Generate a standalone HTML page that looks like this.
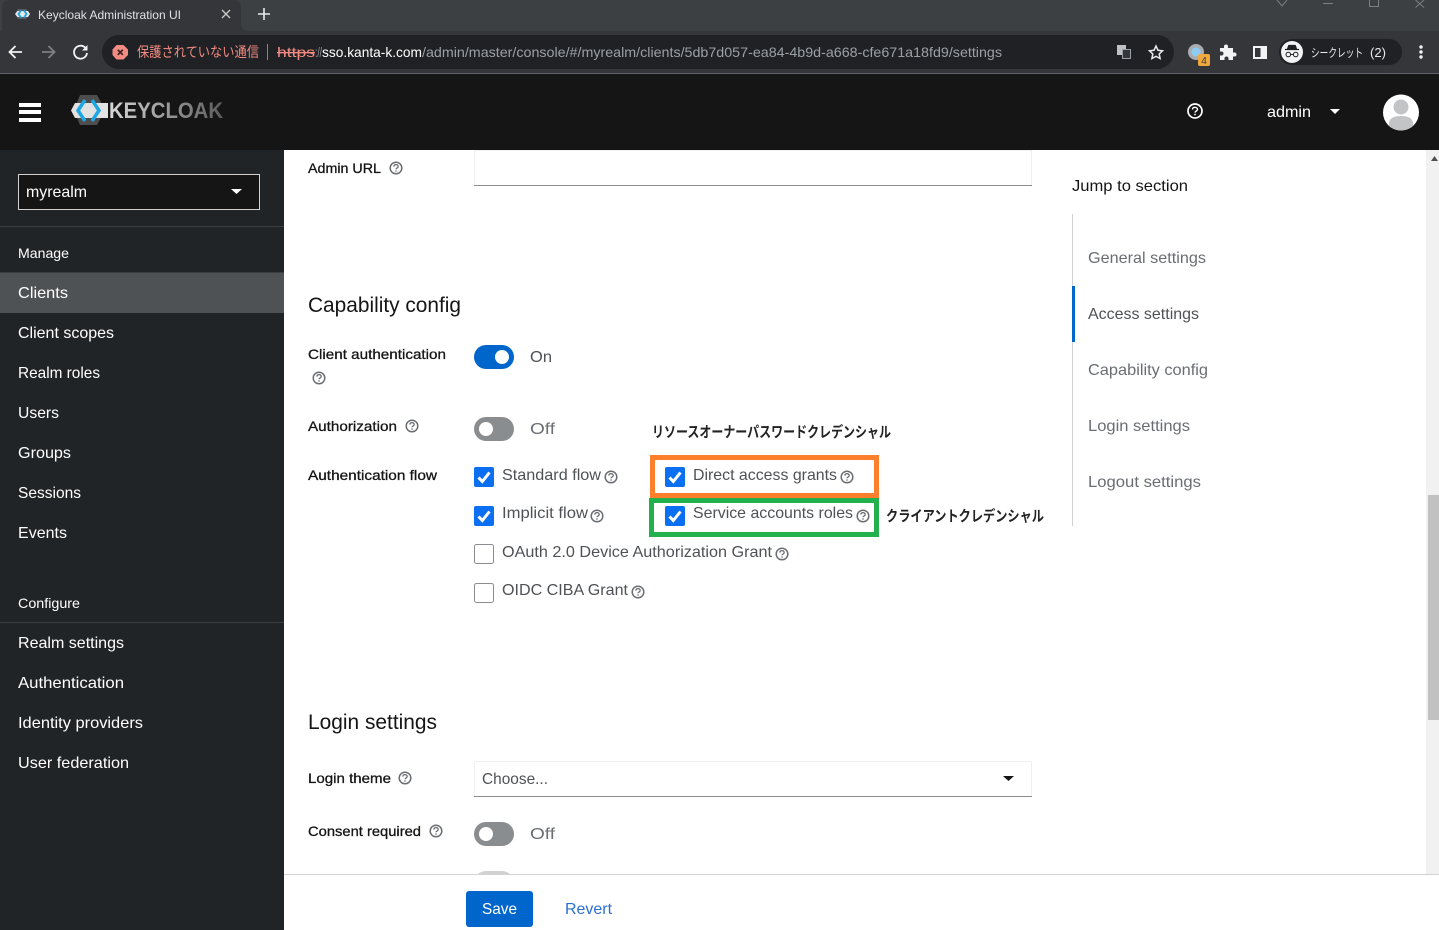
<!DOCTYPE html>
<html lang="ja"><head><meta charset="utf-8"><title>Keycloak Administration UI</title>
<style>
html,body{margin:0;padding:0;background:#fff;overflow:hidden}
svg{display:block;width:1439px;height:930px}
text{font-family:"Liberation Sans","Noto Sans CJK JP",sans-serif;dominant-baseline:auto}
.s{font-size:16px;fill:#fff}
.l{font-size:14px;fill:#151515;stroke:#151515;stroke-width:.3px}
.v{font-size:16px;fill:#4f5255}
.j{font-size:16px;fill:#6a6e73}
.h{font-size:21px;fill:#151515}
.jp{font-size:15px;font-weight:bold;fill:#222}
</style></head><body>
<svg xmlns="http://www.w3.org/2000/svg" width="1439" height="930" viewBox="0 0 1439 930">
<defs>
<g id="q"><circle r="5.8" fill="none" stroke="#6a6e73" stroke-width="1.5"/><path d="M-2.1-1.4C-2.1-3 -.9-3.4 0-3.4 1.3-3.4 2.2-2.6 2.2-1.5 2.2 0 0 .1 0 1.3" fill="none" stroke="#6a6e73" stroke-width="1.3"/><circle cy="3" r=".8" fill="#6a6e73"/></g>
<g id="c"><rect width="20" height="20" rx="2" fill="#0a6ff0"/><path d="M4.5 10.5 8.3 14.5 15.5 5.5" fill="none" stroke="#fff" stroke-width="3"/></g>
<g id="u"><rect x=".5" y=".5" width="19" height="19" rx="2" fill="#fff" stroke="#8a8d90"/></g>
<linearGradient id="kg" x1="0" x2="1" y1="0" y2="0"><stop offset="0" stop-color="#d8d8d8"/><stop offset="1" stop-color="#5c5c5c"/></linearGradient>
</defs>

<!-- browser chrome -->
<rect width="1439" height="31" fill="#3c4043"/>
<path d="M2 31V8Q2 0 10 0H233Q241 0 241 8V23Q241 31 249 31Z" fill="#35363a"/>
<rect y="31" width="1439" height="42" fill="#35363a"/>
<rect y="73" width="1439" height="1" fill="#5f6368"/>
<path d="M18 9H26L30 14 26 19H18L15 14Z" fill="#5a5d60"/><path d="M15 14 17.500 11H28L30 14 28 17H17.500Z" fill="#e8e8e8"/><path d="M21 10.500 18.500 14 21 17.500M24 10.500 26.500 14 24 17.500" stroke="#1ea5e0" stroke-width="1.800" fill="none"/>
<text x="38" y="19" font-size="12" fill="#dee1e6" textLength="143" lengthAdjust="spacingAndGlyphs">Keycloak Administration UI</text>
<path d="M222 10 230 18M230 10 222 18" stroke="#c4c7c5" stroke-width="1.4"/>
<path d="M264 8V20M258 14H270" stroke="#e8eaed" stroke-width="1.6"/>
<path d="M22 52H10M15.5 46 9.5 52 15.5 58" fill="none" stroke="#f1f3f4" stroke-width="1.8"/>
<path d="M54 52H42M48.5 46 54.5 52 48.5 58" fill="none" stroke="#7d8083" stroke-width="1.8"/>
<path d="M85.5 48A6.5 6.5 0 1 0 87 53" fill="none" stroke="#f1f3f4" stroke-width="1.8"/><path d="M87.5 45V50.5H82Z" fill="#f1f3f4"/>
<rect x="102" y="35" width="1072" height="34" rx="17" fill="#202124"/>
<path d="M116.5 45H123.5L128 49.5V55L123.5 59.500H116.500L112.500 55V49.500Z" fill="#f28b82"/><path d="M117.800 49.800 122.800 54.800M122.800 49.800 117.800 54.800" stroke="#3a2020" stroke-width="1.700"/>
<text x="137" y="57" font-size="14" fill="#f28b82" textLength="122" lengthAdjust="spacingAndGlyphs">保護されていない通信</text>
<rect x="267" y="44" width="1" height="16" fill="#80868b"/>
<text x="277" y="57" font-size="14" fill="#f28b82" textLength="38" lengthAdjust="spacingAndGlyphs" text-decoration="line-through">https</text>
<text x="315" y="57" font-size="14" fill="#9aa0a6" textLength="7" lengthAdjust="spacingAndGlyphs">://</text>
<text x="322" y="57" font-size="14" fill="#fff" textLength="100" lengthAdjust="spacingAndGlyphs">sso.kanta-k.com</text>
<text x="422" y="57" font-size="14" fill="#9aa0a6" textLength="580" lengthAdjust="spacingAndGlyphs">/admin/master/console/#/myrealm/clients/5db7d057-ea84-4b9d-a668-cfe671a18fd9/settings</text>
<rect x="1117" y="45" width="9" height="10" fill="#bdc1c6"/><rect x="1122.500" y="49.500" width="8" height="9" fill="#35363a" stroke="#9aa0a6"/>
<path d="M1156 46 1158 50.300 1162.500 50.800 1159.200 54 1160.100 58.500 1156 56.300 1151.900 58.500 1152.800 54 1149.500 50.800 1154 50.300Z" fill="none" stroke="#e8eaed" stroke-width="1.500"/>
<circle cx="1196" cy="52" r="8" fill="#a9adb1"/><circle cx="1196" cy="52" r="4.500" fill="#8ecbf5"/>
<rect x="1198" y="54" width="12" height="12" rx="2" fill="#f0a83c"/><text x="1204" y="64" font-size="10" fill="#3a3a3a" text-anchor="middle">4</text>
<path d="M1220 48H1224V46.500A2 2 0 0 1 1228 46.500V48H1233V52.500H1234.500A2 2 0 0 1 1234.500 56.500H1233V60H1228.500V58.500A2 2 0 0 0 1224.500 58.500V60H1220V55.500H1221.500A2 2 0 0 0 1221.500 51.500H1220Z" fill="#f1f3f4"/>
<rect x="1253" y="46" width="14" height="13" fill="#f1f3f4"/><rect x="1255" y="48" width="5.500" height="9" fill="#35363a"/>
<rect x="1279" y="39" width="123" height="26" rx="13" fill="#202124"/>
<circle cx="1292" cy="52" r="11" fill="#f1f3f4"/>
<path d="M1285 49.500H1299M1287.500 49 1288.800 45.500H1295.200L1296.500 49" stroke="#202124" stroke-width="1.200" fill="#202124"/><circle cx="1288.300" cy="54.500" r="2.300" fill="none" stroke="#202124" stroke-width="1"/><circle cx="1295.700" cy="54.500" r="2.300" fill="none" stroke="#202124" stroke-width="1"/><path d="M1290.500 54.500H1293.500" stroke="#202124"/>
<text x="1311" y="57" font-size="12" fill="#e8eaed" textLength="52" lengthAdjust="spacingAndGlyphs">シークレット</text>
<text x="1370" y="57" font-size="13" fill="#e8eaed" textLength="16" lengthAdjust="spacing">(2)</text>
<circle cx="1421" cy="47" r="1.700" fill="#f1f3f4"/><circle cx="1421" cy="52" r="1.700" fill="#f1f3f4"/><circle cx="1421" cy="57" r="1.700" fill="#f1f3f4"/>
<path d="M1277 0 1282 6 1287 0" fill="none" stroke="#7c7f82"/><path d="M1323 3.500H1333" stroke="#7c7f82"/><path d="M1369.500 0V6.500H1378.500V0" fill="none" stroke="#7c7f82"/><path d="M1415.500 0 1424 7.500M1424 0 1415.500 7.500" stroke="#7c7f82"/>

<!-- header -->
<rect y="74" width="1439" height="76" fill="#151515"/>
<rect x="19" y="103" width="22" height="4" fill="#fff"/><rect x="19" y="110" width="22" height="4" fill="#fff"/><rect x="19" y="118" width="22" height="4" fill="#fff"/>
<path d="M80 95H97L105 110 97 125H80L74 110Z" fill="#4d4d4d"/>
<path d="M75 103H108V118H75L71 110.500Z" fill="#e2e2e2"/>
<path d="M85 100 78 110.500 85 121M92 100 99 110.500 92 121" fill="none" stroke="#1fa7e4" stroke-width="3.500"/>
<text x="109" y="118" font-size="22" font-weight="bold" fill="url(#kg)" textLength="114" lengthAdjust="spacingAndGlyphs">KEYCLOAK</text>
<circle cx="1195" cy="111" r="7" fill="none" stroke="#fff" stroke-width="1.700"/><path d="M1192.500 109.500C1192.500 107.800 1193.800 107.300 1195 107.300 1196.500 107.300 1197.500 108.200 1197.500 109.400 1197.500 111 1195 111.200 1195 112.600" fill="none" stroke="#fff" stroke-width="1.400"/><circle cx="1195" cy="114.500" r=".9" fill="#fff"/>
<text x="1267" y="117" font-size="16" fill="#fff" textLength="44" lengthAdjust="spacingAndGlyphs">admin</text>
<path d="M1330 109H1340L1335 114Z" fill="#fff"/>
<circle cx="1401" cy="112.500" r="18" fill="#fff"/>
<clipPath id="av"><circle cx="1401" cy="112.500" r="18"/></clipPath>
<g clip-path="url(#av)" fill="#c2c4c6"><circle cx="1401" cy="107" r="7.500"/><path d="M1389 131V124C1389 118 1394 116 1401 116S1413 118 1413 124V131Z"/></g>

<!-- sidebar -->
<rect y="150" width="284" height="780" fill="#212427"/>
<rect x="18.500" y="174.500" width="241" height="35" fill="#151515" stroke="#d2d2d2"/>
<text x="26" y="197" font-size="16" fill="#fff" textLength="61" lengthAdjust="spacingAndGlyphs">myrealm</text>
<path d="M231 189H242L236.500 194Z" fill="#fff"/>
<rect y="226" width="284" height="1" fill="#3c3f42"/>
<text x="18" y="258" font-size="14" fill="#fff" textLength="51" lengthAdjust="spacingAndGlyphs">Manage</text>
<rect y="272" width="284" height="1" fill="#3c3f42"/>
<rect y="273" width="284" height="40" fill="#4f5255"/>
<text class="s" x="18" y="298" textLength="50" lengthAdjust="spacingAndGlyphs">Clients</text>
<text class="s" x="18" y="338" textLength="96" lengthAdjust="spacingAndGlyphs">Client scopes</text>
<text class="s" x="18" y="378" textLength="82" lengthAdjust="spacingAndGlyphs">Realm roles</text>
<text class="s" x="18" y="418" textLength="41" lengthAdjust="spacingAndGlyphs">Users</text>
<text class="s" x="18" y="458" textLength="53" lengthAdjust="spacingAndGlyphs">Groups</text>
<text class="s" x="18" y="498" textLength="63" lengthAdjust="spacingAndGlyphs">Sessions</text>
<text class="s" x="18" y="538" textLength="49" lengthAdjust="spacingAndGlyphs">Events</text>
<text x="18" y="608" font-size="14" fill="#fff" textLength="62" lengthAdjust="spacingAndGlyphs">Configure</text>
<rect y="622" width="284" height="1" fill="#3c3f42"/>
<text class="s" x="18" y="648" textLength="106" lengthAdjust="spacingAndGlyphs">Realm settings</text>
<text class="s" x="18" y="688" textLength="106" lengthAdjust="spacingAndGlyphs">Authentication</text>
<text class="s" x="18" y="728" textLength="125" lengthAdjust="spacingAndGlyphs">Identity providers</text>
<text class="s" x="18" y="768" textLength="111" lengthAdjust="spacingAndGlyphs">User federation</text>

<!-- main form -->
<text class="l" x="308" y="173" textLength="73" lengthAdjust="spacingAndGlyphs">Admin URL</text><use href="#q" x="396" y="168"/>
<rect x="474.500" y="150.500" width="557" height="35" fill="#fff" stroke="#f0f0f0"/><rect x="474" y="185" width="558" height="1" fill="#8a8d90"/>
<text class="h" x="308" y="312" textLength="153" lengthAdjust="spacingAndGlyphs">Capability config</text>
<text class="l" x="308" y="359" textLength="138" lengthAdjust="spacingAndGlyphs">Client authentication</text><use href="#q" x="319" y="378"/>
<rect x="474" y="345" width="40" height="24" rx="12" fill="#06c"/><circle cx="502" cy="357" r="7" fill="#fff"/>
<text class="v" x="530" y="362" textLength="22" lengthAdjust="spacingAndGlyphs">On</text>
<text class="l" x="308" y="431" textLength="89" lengthAdjust="spacingAndGlyphs">Authorization</text><use href="#q" x="412" y="426"/>
<rect x="474" y="417" width="40" height="24" rx="12" fill="#8a8d90"/><circle cx="486" cy="429" r="7" fill="#fff"/>
<text class="j" x="530" y="434" textLength="25" lengthAdjust="spacingAndGlyphs">Off</text>
<text class="jp" x="652" y="437" textLength="239" lengthAdjust="spacingAndGlyphs">リソースオーナーパスワードクレデンシャル</text>
<text class="l" x="308" y="480" textLength="129" lengthAdjust="spacingAndGlyphs">Authentication flow</text>

<use href="#c" x="474" y="467"/><text class="v" x="502" y="480" textLength="99" lengthAdjust="spacingAndGlyphs">Standard flow</text><use href="#q" x="611" y="477"/>
<rect x="652.500" y="457.500" width="224" height="38" fill="none" stroke="#fd7e2b" stroke-width="5"/>
<use href="#c" x="665" y="467"/><text class="v" x="693" y="480" textLength="144" lengthAdjust="spacingAndGlyphs">Direct access grants</text><use href="#q" x="847" y="477"/>
<use href="#c" x="474" y="506"/><text class="v" x="502" y="518" textLength="86" lengthAdjust="spacingAndGlyphs">Implicit flow</text><use href="#q" x="597" y="516"/>
<rect x="651.500" y="500.500" width="225" height="34" fill="none" stroke="#22b14c" stroke-width="5"/>
<use href="#c" x="665" y="506"/><text class="v" x="693" y="518" textLength="160" lengthAdjust="spacingAndGlyphs">Service accounts roles</text><use href="#q" x="863" y="516"/>
<text class="jp" x="886" y="521" textLength="158" lengthAdjust="spacingAndGlyphs">クライアントクレデンシャル</text>
<use href="#u" x="474" y="544"/><text class="v" x="502" y="557" textLength="270" lengthAdjust="spacingAndGlyphs">OAuth 2.0 Device Authorization Grant</text><use href="#q" x="782" y="554"/>
<use href="#u" x="474" y="583"/><text class="v" x="502" y="595" textLength="126" lengthAdjust="spacingAndGlyphs">OIDC CIBA Grant</text><use href="#q" x="638" y="592"/>

<text class="h" x="308" y="729" textLength="129" lengthAdjust="spacingAndGlyphs">Login settings</text>
<text class="l" x="308" y="783" textLength="83" lengthAdjust="spacingAndGlyphs">Login theme</text><use href="#q" x="405" y="778"/>
<rect x="474.500" y="761.500" width="557" height="35" fill="#fff" stroke="#f0f0f0"/><rect x="474" y="796" width="558" height="1" fill="#8a8d90"/>
<text class="v" x="482" y="784" textLength="66" lengthAdjust="spacingAndGlyphs">Choose...</text>
<path d="M1003 776H1014L1008.500 781Z" fill="#151515"/>
<text class="l" x="308" y="836" textLength="113" lengthAdjust="spacingAndGlyphs">Consent required</text><use href="#q" x="436" y="831"/>
<rect x="474" y="822" width="40" height="24" rx="12" fill="#8a8d90"/><circle cx="486" cy="834" r="7" fill="#fff"/>
<text class="j" x="530" y="839" textLength="25" lengthAdjust="spacingAndGlyphs">Off</text>
<rect x="474" y="871" width="40" height="24" rx="12" fill="#d2d2d2"/>

<!-- jump links -->
<text class="v" x="1072" y="191" textLength="116" lengthAdjust="spacingAndGlyphs" style="fill:#151515">Jump to section</text>
<rect x="1072" y="214" width="1" height="312" fill="#d2d2d2"/>
<rect x="1072" y="286" width="3" height="56" fill="#06c"/>
<text class="j" x="1088" y="263" textLength="118" lengthAdjust="spacingAndGlyphs">General settings</text>
<text class="v" x="1088" y="319" textLength="111" lengthAdjust="spacingAndGlyphs">Access settings</text>
<text class="j" x="1088" y="375" textLength="120" lengthAdjust="spacingAndGlyphs">Capability config</text>
<text class="j" x="1088" y="431" textLength="102" lengthAdjust="spacingAndGlyphs">Login settings</text>
<text class="j" x="1088" y="487" textLength="113" lengthAdjust="spacingAndGlyphs">Logout settings</text>

<!-- scrollbar -->
<rect x="1426" y="150" width="13" height="724" fill="#f1f1f1"/>
<rect x="1428" y="495" width="11" height="225" fill="#c1c1c1"/>
<path d="M1434.500 156 1438 161H1431Z" fill="#505050"/>

<!-- footer -->
<rect x="284" y="875" width="1155" height="55" fill="#fff"/>
<rect x="284" y="874" width="1155" height="1" fill="#d2d2d2"/>
<rect x="466" y="891" width="67" height="36" rx="3" fill="#06c"/>
<text x="482" y="914" font-size="16" fill="#fff" textLength="35" lengthAdjust="spacingAndGlyphs">Save</text>
<text x="565" y="914" font-size="16" fill="#2b6fd0" textLength="47" lengthAdjust="spacingAndGlyphs">Revert</text>
</svg>
</body></html>
